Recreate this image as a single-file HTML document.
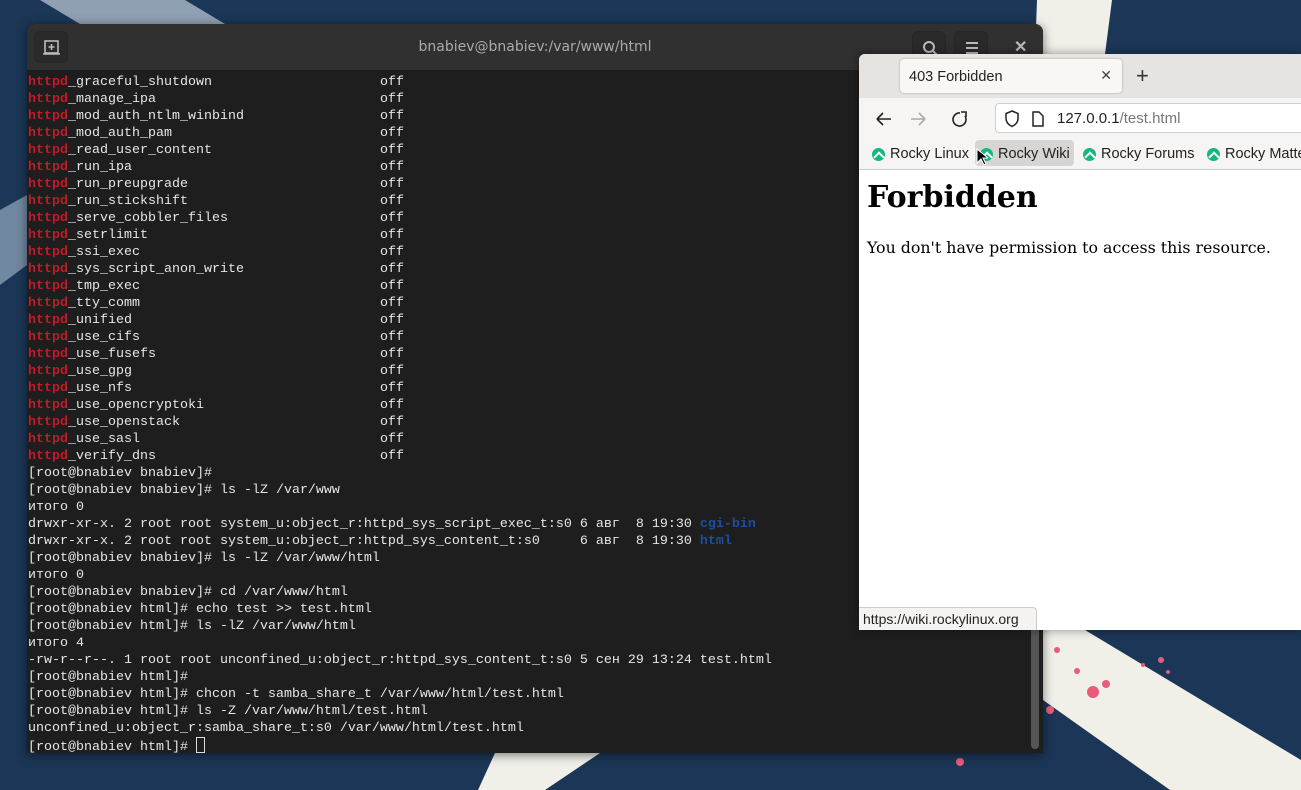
<!DOCTYPE html>
<html><head><meta charset="utf-8"><style>
*{margin:0;padding:0;box-sizing:border-box}
body{width:1301px;height:790px;overflow:hidden;background:#1b3656;position:relative;font-family:"Liberation Sans",sans-serif}
#bg{position:absolute;left:0;top:0}
.term{position:absolute;left:27px;top:24px;width:1016px;height:729px;background:#1e1e1e;border-radius:8px 8px 0 0;overflow:hidden;box-shadow:0 2px 10px rgba(0,0,0,.5)}
.thead{height:46px;background:#303030;position:relative}
.tbtn{position:absolute;top:7px;width:34px;height:32px;border-radius:6px;background:#2a2a2a;border:1px solid #262626}
.ttitle{position:absolute;left:0;right:0;top:15px;text-align:center;color:#aaa;font-size:14px;font-family:"DejaVu Sans",sans-serif}
pre{position:absolute;left:1px;top:50px;font-family:"Liberation Mono","DejaVu Sans Mono",monospace;font-size:13.33px;line-height:17px;color:#e6e6e6}
.n{display:inline-block;width:352px}
.r{color:#c01c28;font-weight:bold}.b{color:#1c4ea0;font-weight:bold}
.cur{display:inline-block;width:9px;height:16px;border:1px solid #ddd;vertical-align:-3px}
.sb{position:absolute;right:4px;top:590px;width:8px;height:135px;background:#555;border-radius:4px}
.br{position:absolute;left:859px;top:54px;width:442px;height:576px;background:#fff;box-shadow:0 0 10px rgba(0,0,0,.4);border-radius:6px 0 0 0;overflow:hidden}
.tabbar{height:44px;background:#e6e3e0}
.tab{position:absolute;left:41px;top:5px;width:222px;height:34px;background:#f8f7f6;border-radius:4px;box-shadow:0 0 2px rgba(0,0,0,.3);font-size:14.5px;color:#222;padding:10px 9px}
.tool{position:absolute;top:44px;left:0;right:0;height:72px;background:#f6f5f3;border-bottom:1px solid #ccc}
.url{position:absolute;left:136px;top:5px;width:320px;height:30px;background:#fff;border:1px solid #cfcfcf;border-radius:4px;font-size:15px;color:#222;padding:6px 0 0 61px;white-space:nowrap}
.bm{position:absolute;top:42px;font-size:14.5px;color:#222;height:26px;padding:6px 4px 0 23px;border-radius:4px;white-space:nowrap}
.bm i{position:absolute;left:5px;top:8px;width:13px;height:13px;border-radius:50%;background:#10b981}
.bm i:after{content:"";position:absolute;left:3px;top:5px;width:6px;height:6px;border-left:2px solid #fff;border-top:2px solid #fff;transform:rotate(45deg)}
h1{position:absolute;left:8px;top:126px;font-family:"DejaVu Serif",serif;font-size:30px;font-weight:bold;color:#000;white-space:nowrap}
p{position:absolute;left:8px;top:184px;font-family:"DejaVu Serif",serif;font-size:15.8px;color:#000;white-space:nowrap}
.st{position:absolute;left:0;top:553px;height:23px;width:178px;background:#f4f3f1;border:1px solid #ccc;border-left:none;border-bottom:none;border-radius:0 4px 0 0;font-size:14px;color:#222;padding:3px 4px;white-space:nowrap}
</style></head><body>
<svg id="bg" width="1301" height="790">
<polygon points="40,0 185,0 225,24 80,24" fill="#8fa0b2"/>
<polygon points="0,210 27,195 27,265 0,285" fill="#7088a0"/>
<polygon points="1037,0 1112,0 1105,54 1035,54" fill="#f0efe8"/>
<polygon points="1043,630 1085,630 1301,760 1301,790 1170,790 1043,700" fill="#f0efe8"/>
<polygon points="495,753 600,753 545,790 478,790" fill="#f0efe8"/>
<g fill="#e85c7a"><circle cx="1093" cy="692" r="6"/><circle cx="1106" cy="684" r="4"/><circle cx="1057" cy="650" r="3"/><circle cx="1077" cy="671" r="3"/><circle cx="1161" cy="660" r="3"/><circle cx="960" cy="762" r="4"/><circle cx="1050" cy="710" r="4"/><circle cx="1168" cy="672" r="2"/><circle cx="1143" cy="665" r="2"/></g>
</svg>
<div class="term">
<div class="thead">
<div class="tbtn" style="left:7px"><svg width="34" height="32"><rect x="10" y="9" width="13" height="12" fill="none" stroke="#bbb" stroke-width="1.6"/><path d="M8 22h17M16.5 12v6M13.5 15h6" stroke="#bbb" stroke-width="1.6"/></svg></div>
<div class="ttitle">bnabiev@bnabiev:/var/www/html</div>
<div class="tbtn" style="left:885px"><svg width="34" height="32"><circle cx="16" cy="15" r="5" fill="none" stroke="#bbb" stroke-width="2"/><path d="M20 19l4 4" stroke="#bbb" stroke-width="2"/></svg></div>
<div class="tbtn" style="left:927px"><svg width="34" height="32"><path d="M11 11h12M11 16h12M11 21h12" stroke="#bbb" stroke-width="2"/></svg></div>
<div style="position:absolute;left:987px;top:13px;color:#bbb;font-size:16px;font-weight:bold">✕</div>
</div>
<pre><span class="n"><span class="r">httpd</span>_graceful_shutdown</span>off
<span class="n"><span class="r">httpd</span>_manage_ipa</span>off
<span class="n"><span class="r">httpd</span>_mod_auth_ntlm_winbind</span>off
<span class="n"><span class="r">httpd</span>_mod_auth_pam</span>off
<span class="n"><span class="r">httpd</span>_read_user_content</span>off
<span class="n"><span class="r">httpd</span>_run_ipa</span>off
<span class="n"><span class="r">httpd</span>_run_preupgrade</span>off
<span class="n"><span class="r">httpd</span>_run_stickshift</span>off
<span class="n"><span class="r">httpd</span>_serve_cobbler_files</span>off
<span class="n"><span class="r">httpd</span>_setrlimit</span>off
<span class="n"><span class="r">httpd</span>_ssi_exec</span>off
<span class="n"><span class="r">httpd</span>_sys_script_anon_write</span>off
<span class="n"><span class="r">httpd</span>_tmp_exec</span>off
<span class="n"><span class="r">httpd</span>_tty_comm</span>off
<span class="n"><span class="r">httpd</span>_unified</span>off
<span class="n"><span class="r">httpd</span>_use_cifs</span>off
<span class="n"><span class="r">httpd</span>_use_fusefs</span>off
<span class="n"><span class="r">httpd</span>_use_gpg</span>off
<span class="n"><span class="r">httpd</span>_use_nfs</span>off
<span class="n"><span class="r">httpd</span>_use_opencryptoki</span>off
<span class="n"><span class="r">httpd</span>_use_openstack</span>off
<span class="n"><span class="r">httpd</span>_use_sasl</span>off
<span class="n"><span class="r">httpd</span>_verify_dns</span>off
[root@bnabiev bnabiev]#
[root@bnabiev bnabiev]# ls -lZ /var/www
итого 0
drwxr-xr-x. 2 root root system_u:object_r:httpd_sys_script_exec_t:s0 6 авг  8 19:30 <span class="b">cgi-bin</span>
drwxr-xr-x. 2 root root system_u:object_r:httpd_sys_content_t:s0     6 авг  8 19:30 <span class="b">html</span>
[root@bnabiev bnabiev]# ls -lZ /var/www/html
итого 0
[root@bnabiev bnabiev]# cd /var/www/html
[root@bnabiev html]# echo test &gt;&gt; test.html
[root@bnabiev html]# ls -lZ /var/www/html
итого 4
-rw-r--r--. 1 root root unconfined_u:object_r:httpd_sys_content_t:s0 5 сен 29 13:24 test.html
[root@bnabiev html]#
[root@bnabiev html]# chcon -t samba_share_t /var/www/html/test.html
[root@bnabiev html]# ls -Z /var/www/html/test.html
unconfined_u:object_r:samba_share_t:s0 /var/www/html/test.html
[root@bnabiev html]# <span class="cur"></span></pre>
<div class="sb"></div>
</div>
<div class="br">
<div class="tabbar"><div class="tab">403 Forbidden<span style="position:absolute;right:10px;top:8px;font-size:14px;color:#444">✕</span></div>
<div style="position:absolute;left:277px;top:9px;font-size:22px;color:#333">+</div></div>
<div class="tool">
<svg style="position:absolute;left:14px;top:11px" width="110" height="20"><path d="M4 10h14M4 10l6-6M4 10l6 6" stroke="#222" stroke-width="1.6" fill="none"/><path d="M38 10h14M52 10l-6-6M52 10l-6 6" stroke="#aaa" stroke-width="1.6" fill="none"/><path d="M87 4a6.5 6.5 0 1 0 5 3" stroke="#222" stroke-width="1.6" fill="none"/><path d="M88 3h5v5" stroke="#222" stroke-width="1.6" fill="none"/></svg>
<div class="url"><svg style="position:absolute;left:8px;top:6px" width="50" height="18"><path d="M8 1l6 2.5v5c0 4-3 6.5-6 8-3-1.5-6-4-6-8v-5z" fill="none" stroke="#222" stroke-width="1.5"/><path d="M29 2h6l4 4v10h-10z" fill="none" stroke="#222" stroke-width="1.5"/></svg>127.0.0.1<span style="color:#777">/test.html</span></div>
<div class="bm" style="left:8px"><i></i>Rocky Linux</div>
<div class="bm" style="left:116px;background:#d6d5d3"><i></i>Rocky Wiki</div>
<div class="bm" style="left:219px"><i></i>Rocky Forums</div>
<div class="bm" style="left:343px"><i></i>Rocky Matte</div>
</div>
<h1>Forbidden</h1>
<p>You don't have permission to access this resource.</p>
<div class="st">https://wiki.rockylinux.org</div>
</div>
<svg style="position:absolute;left:976px;top:148px" width="12" height="18"><path d="M1 1v14l4-4 3 6 2-1-3-6h5z" fill="#000" stroke="#fff" stroke-width="1"/></svg>
</body></html>
